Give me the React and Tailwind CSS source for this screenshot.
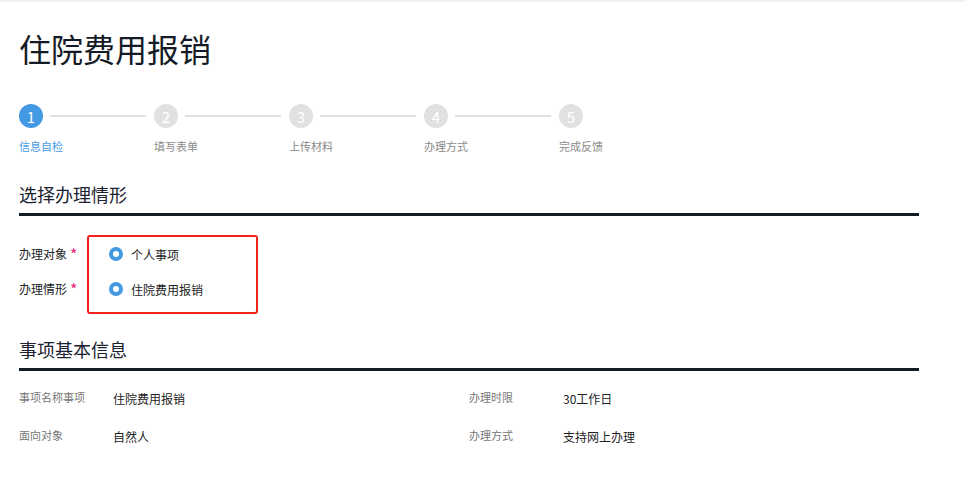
import React from 'react';

const font = { fontFamily: '"Noto Sans CJK SC", "Noto Sans", sans-serif' };

const steps = ['信息自检', '填写表单', '上传材料', '办理方式', '完成反馈'];

const StepBar = () => (
  <div className="flex mt-[40px]">
    {steps.map((label, i) => (
      <div key={label} className={i < steps.length - 1 ? 'w-[135px]' : 'w-[60px]'}>
        <div className="flex items-center h-6">
          <div
            className={`w-6 h-6 rounded-full flex items-center justify-center text-[15px] leading-none text-white ${
              i === 0 ? 'bg-[#4499e3]' : 'bg-[#e1e1e1]'
            }`}
          >
            {i + 1}
          </div>
          {i < steps.length - 1 && <div className="ml-[7px] w-[96px] h-[2px] bg-[#e1e1e1]"></div>}
        </div>
        <div className={`mt-[12px] text-[11px] leading-[12px] whitespace-nowrap ${i === 0 ? 'text-[#4499e3]' : 'text-[#8a8a8a]'}`}>
          {label}
        </div>
      </div>
    ))}
  </div>
);

const SectionTitle = ({ children, className = '' }) => (
  <div className={`w-[900px] border-b-[3px] border-[#141c26] ${className}`}>
    <h2 className="text-[18px] leading-[18px] text-[#1b2230] pb-[10px]">{children}</h2>
  </div>
);

const Radio = ({ label }) => (
  <div className="flex items-center h-[14px]">
    <span className="w-[14px] h-[14px] rounded-full border-[4px] border-[#4499e3] bg-white"></span>
    <span className="ml-[8px] text-[12px] leading-[13px] text-[#222]">{label}</span>
  </div>
);

const InfoCell = ({ label, value }) => (
  <div className="flex items-center h-[16px]">
    <div className="w-[94px] text-[11px] leading-[12px] text-[#777] -mt-[3px]">{label}</div>
    <div className="text-[12px] leading-[13px] text-[#222]">{value}</div>
  </div>
);

export default function App() {
  return (
    <div className="w-[965px] h-[477px] bg-white overflow-hidden" style={font}>
      <div className="h-[2px] bg-[#f1f1f1]"></div>
      <div className="pl-[19px]">
        <h1 className="mt-[30px] text-[32px] leading-[32px] text-[#151b26]">住院费用报销</h1>

        <StepBar />

        <SectionTitle className="mt-[33px]">选择办理情形</SectionTitle>

        {/* form area */}
        <div className="flex mt-[19px]">
          <div className="w-[68px] pt-[12px] flex flex-col gap-[21px]">
            <div className="h-[14px] flex items-center text-[12px] text-[#222] whitespace-nowrap">
              办理对象<span className="text-[#e3257a] text-[16px] ml-[3px]">*</span>
            </div>
            <div className="h-[14px] flex items-center text-[12px] text-[#222] whitespace-nowrap">
              办理情形<span className="text-[#e3257a] text-[16px] ml-[3px]">*</span>
            </div>
          </div>
          <div className="w-[171px] h-[79px] border-2 border-[#f5231c] rounded-[3px] pl-[20px] pt-[10px] flex flex-col gap-[21px]">
            <Radio label="个人事项" />
            <Radio label="住院费用报销" />
          </div>
        </div>

        <SectionTitle className="mt-[26px]">事项基本信息</SectionTitle>

        <div className="w-[900px] grid grid-cols-2 gap-y-[22px] mt-[19px]">
          <InfoCell label="事项名称事项" value="住院费用报销" />
          <InfoCell label="办理时限" value="30工作日" />
          <InfoCell label="面向对象" value="自然人" />
          <InfoCell label="办理方式" value="支持网上办理" />
        </div>
      </div>
    </div>
  );
}
